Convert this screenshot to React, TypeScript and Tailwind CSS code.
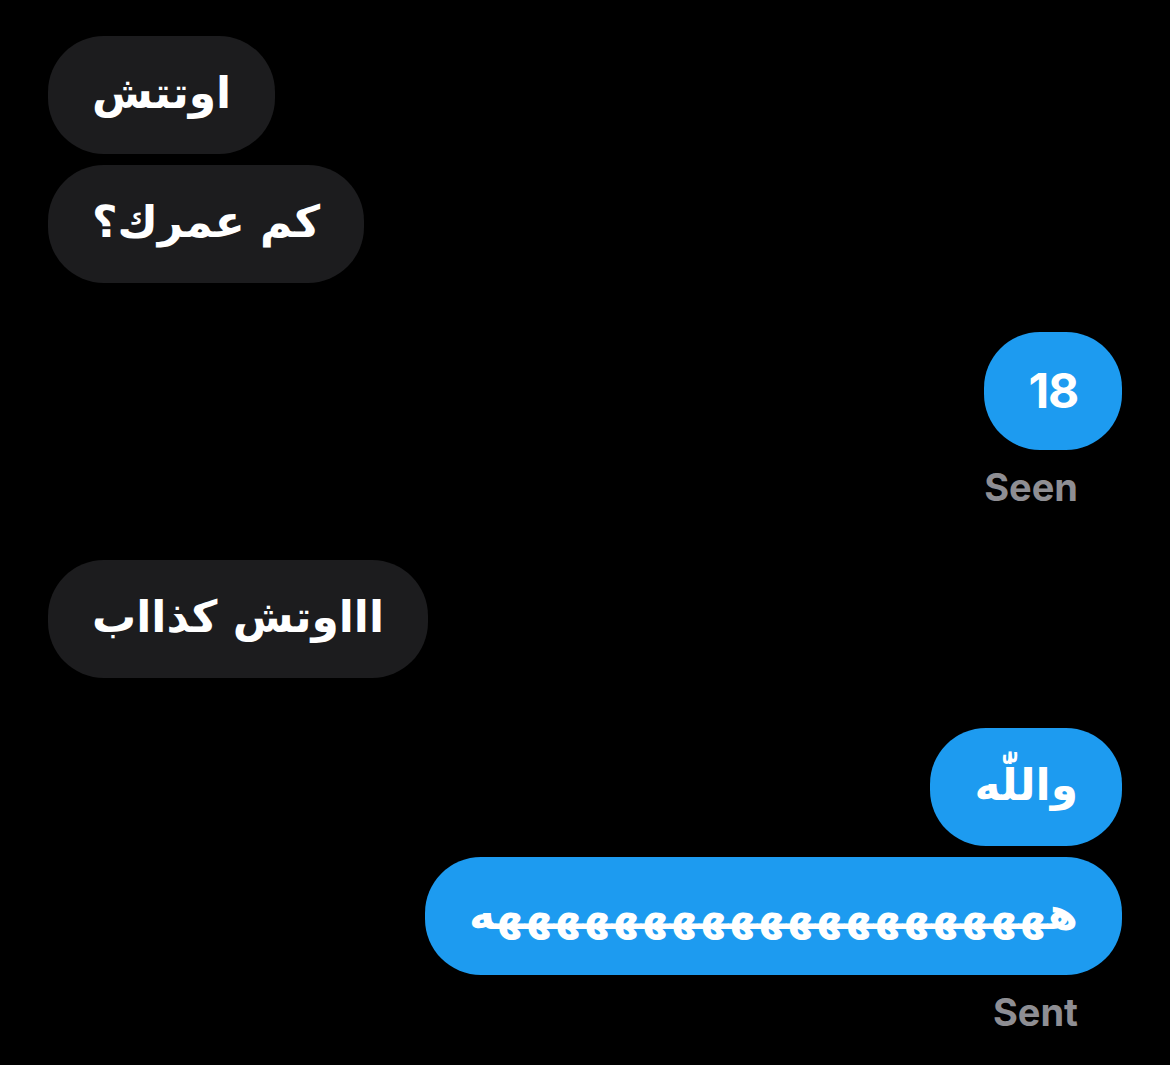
import React from 'react';

type Msg = { text: string; mine: boolean; status?: string; gap?: string };

const messages: Msg[] = [
  { text: 'اوتتش', mine: false },
  { text: 'كم عمرك؟', mine: false, gap: 'mt-[11px]' },
  { text: '18', mine: true, status: 'Seen', gap: 'mt-[49px]' },
  { text: 'اااوتش كذااب', mine: false, gap: 'mt-[54px]' },
  { text: 'واللّٰه', mine: true, gap: 'mt-[50px]' },
  { text: 'ههههههههههههههههههههه', mine: true, status: 'Sent', gap: 'mt-[11px]' },
];

const isArabic = (s: string) => /[\u0600-\u06FF]/.test(s);

const App: React.FC = () => {
  return (
    <div className="w-[1170px] h-[1065px] bg-black overflow-hidden px-[48px] pt-[36px] flex flex-col">
      {messages.map((m, i) => (
        <div key={i} className={`flex flex-col ${m.mine ? 'items-end' : 'items-start'} ${m.gap || ''}`}>
          <div
            dir={isArabic(m.text) ? 'rtl' : 'ltr'}
            className={`h-[118px] rounded-[56px] flex items-center px-[44px] text-white font-bold ${
              m.mine ? 'bg-[#1d9bf0]' : 'bg-[#1c1c1e]'
            }`}
          >
            {isArabic(m.text) ? (
              <span className="text-[44px] leading-none [font-family:'DejaVu_Sans',sans-serif] pb-[4px]">
                {m.text}
              </span>
            ) : (
              <span className="text-[48px] leading-none tracking-tight [font-family:Inter,sans-serif]">
                {m.text}
              </span>
            )}
          </div>
          {m.status && (
            <div className="mr-[44px] mt-[18px] text-[38px] leading-none font-bold text-[#8e8e93] [font-family:Inter,sans-serif]">
              {m.status}
            </div>
          )}
        </div>
      ))}
    </div>
  );
};

export default App;
